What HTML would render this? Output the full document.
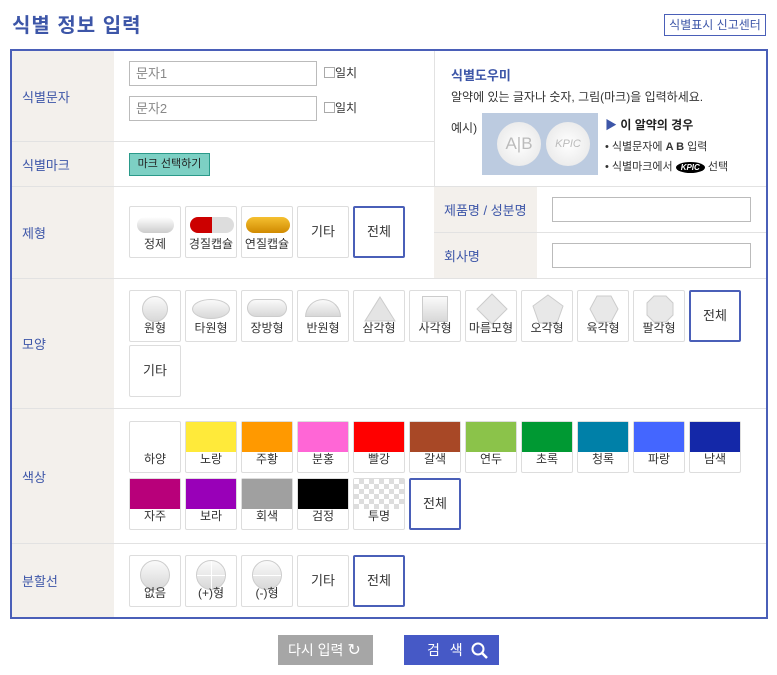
<!DOCTYPE html>
<html><head><meta charset="utf-8"><style>
*{box-sizing:border-box;margin:0;padding:0}
body{width:777px;height:675px;background:#fff;font-family:"Liberation Sans","Noto Sans CJK KR",sans-serif;font-size:13px;color:#333;position:relative;overflow:hidden}
.a{position:absolute}
h1{position:absolute;left:12px;top:9px;font-size:20px;color:#3d56a8;font-weight:bold;letter-spacing:1px}
.rep{left:664px;top:14px;width:102px;height:22px;border:1px solid #4a5fb8;font-size:12px;color:#3d56a8;text-align:center;line-height:20px}
.box{left:10px;top:49px;width:758px;height:570px;border:2px solid #4a5fb8}
.lab{background:#f3f0ec;color:#3d56a8;font-size:13px;display:flex;align-items:center;padding-left:10px}
.hl{height:1px;background:#e2e2e2}
.inp{border:1px solid #bbb;height:25px;font-size:13px;color:#888;padding-left:6px;line-height:23px}
.b{position:absolute;width:52px;height:52px;border:1px solid #ddd;border-radius:2px;background:#fff;font-size:12px;color:#333;text-align:center}
.b .t{position:absolute;bottom:5px;left:0;right:0}
.b.c{line-height:50px;font-size:13px}
.b.sel{border:2px solid #4a5fb8;line-height:48px}
.sw{position:absolute;left:0;top:0;right:0;height:30px}
.sh{position:absolute;left:50%;transform:translateX(-50%);background:linear-gradient(#fafafa,#d8d8d8);border:1px solid #ccc}
</style></head><body>
<h1>식별 정보 입력</h1>
<div class="a rep">식별표시 신고센터</div>
<div class="a box"></div>
<div class="a lab" style="left:12px;top:51px;width:102px;height:90px">식별문자</div>
<div class="a lab" style="left:12px;top:142px;width:102px;height:44px">식별마크</div>
<div class="a lab" style="left:12px;top:187px;width:102px;height:91px">제형</div>
<div class="a lab" style="left:12px;top:279px;width:102px;height:129px">모양</div>
<div class="a lab" style="left:12px;top:409px;width:102px;height:134px">색상</div>
<div class="a lab" style="left:12px;top:544px;width:102px;height:73px">분할선</div>
<div class="a lab" style="left:434px;top:187px;width:103px;height:45px">제품명 / 성분명</div>
<div class="a lab" style="left:434px;top:233px;width:103px;height:45px">회사명</div>
<div class="a hl" style="left:12px;top:141px;width:422px"></div>
<div class="a hl" style="left:12px;top:186px;width:754px"></div>
<div class="a hl" style="left:434px;top:232px;width:332px"></div>
<div class="a hl" style="left:12px;top:278px;width:754px"></div>
<div class="a hl" style="left:12px;top:408px;width:754px"></div>
<div class="a hl" style="left:12px;top:543px;width:754px"></div>
<div class="a" style="left:434px;top:51px;width:1px;height:135px;background:#e2e2e2"></div>
<div class="a inp" style="left:129px;top:61px;width:188px">문자1</div>
<div class="a inp" style="left:129px;top:96px;width:188px">문자2</div>
<div class="a" style="left:324px;top:64px;font-size:12px"><span style="display:inline-block;width:11px;height:11px;border:1px solid #aaa;vertical-align:-1px"></span>일치</div>
<div class="a" style="left:324px;top:99px;font-size:12px"><span style="display:inline-block;width:11px;height:11px;border:1px solid #aaa;vertical-align:-1px"></span>일치</div>
<div class="a" style="left:129px;top:153px;width:81px;height:23px;background:#7dd0c4;border:1px solid #2a9a8a;font-size:11px;color:#222;text-align:center;line-height:21px">마크 선택하기</div>
<div class="a" style="left:451px;top:65px;color:#3d56a8;font-size:13px;font-weight:bold">식별도우미</div>
<div class="a" style="left:451px;top:88px;font-size:12px">알약에 있는 글자나 숫자, 그림(마크)을 입력하세요.</div>
<div class="a" style="left:451px;top:119px;font-size:12px">예시)</div>
<div class="a" style="left:482px;top:113px;width:116px;height:62px;background:#bccbe0">
<div class="a" style="left:15px;top:9px;width:44px;height:44px;border-radius:50%;background:radial-gradient(#fff,#e4e4e4);color:#bbb;font-size:17px;text-align:center;line-height:44px">A|B</div>
<div class="a" style="left:64px;top:9px;width:44px;height:44px;border-radius:50%;background:radial-gradient(#fff,#e4e4e4);color:#bbb;font-size:11px;font-style:italic;text-align:center;line-height:44px">KPIC</div></div>
<div class="a" style="left:605px;top:116px;font-size:12px;font-weight:bold;color:#222"><span style="color:#3d56a8">▶</span> 이 알약의 경우</div>
<div class="a" style="left:605px;top:138px;font-size:11px">• 식별문자에 <b>A B</b> 입력</div>
<div class="a" style="left:605px;top:158px;font-size:11px">• 식별마크에서 <span style="display:inline-block;background:#000;color:#fff;border-radius:50%;font-size:8px;font-style:italic;padding:1px 5px;font-weight:bold">KPIC</span> 선택</div>
<div class="a inp" style="left:552px;top:197px;width:199px"></div>
<div class="a inp" style="left:552px;top:243px;width:199px"></div>
<div class="b" style="left:129px;top:206px"><div class="a" style="left:7px;top:10px;width:37px;height:16px;border-radius:8px;background:linear-gradient(#fff,#ccc)"></div><div class="t">정제</div></div>
<div class="b" style="left:185px;top:206px"><div class="a" style="left:4px;top:10px;width:44px;height:16px;border-radius:8px;background:linear-gradient(90deg,#c00 50%,#ddd 50%)"></div><div class="t">경질캡슐</div></div>
<div class="b" style="left:241px;top:206px"><div class="a" style="left:4px;top:10px;width:44px;height:16px;border-radius:8px;background:linear-gradient(#f5c030,#d08a00)"></div><div class="t">연질캡슐</div></div>
<div class="b c" style="left:297px;top:206px">기타</div>
<div class="b c sel" style="left:353px;top:206px">전체</div>
<div class="b" style="left:129px;top:290px"><div class="sh" style="top:5px;width:26px;height:26px;border-radius:50%"></div><div class="t">원형</div></div>
<div class="b" style="left:185px;top:290px"><div class="sh" style="top:8px;width:38px;height:20px;border-radius:50%"></div><div class="t">타원형</div></div>
<div class="b" style="left:241px;top:290px"><div class="sh" style="top:8px;width:40px;height:18px;border-radius:9px"></div><div class="t">장방형</div></div>
<div class="b" style="left:297px;top:290px"><div class="sh" style="top:8px;width:36px;height:18px;border-radius:18px 18px 0 0"></div><div class="t">반원형</div></div>
<div class="b" style="left:353px;top:290px"><svg class="a" style="left:10px;top:5px" width="32" height="26"><polygon points="16,1 31,25 1,25" fill="#e4e4e4" stroke="#ccc"/></svg><div class="t">삼각형</div></div>
<div class="b" style="left:409px;top:290px"><div class="sh" style="top:5px;width:26px;height:26px"></div><div class="t">사각형</div></div>
<div class="b" style="left:465px;top:290px"><svg class="a" style="left:10px;top:2px" width="32" height="32"><polygon points="16,1 31,16 16,31 1,16" fill="#e8e8e8" stroke="#ccc"/></svg><div class="t">마름모형</div></div>
<div class="b" style="left:521px;top:290px"><svg class="a" style="left:10px;top:3px" width="32" height="30"><polygon points="16,1 31,12 25,29 7,29 1,12" fill="#e8e8e8" stroke="#ccc"/></svg><div class="t">오각형</div></div>
<div class="b" style="left:577px;top:290px"><svg class="a" style="left:11px;top:4px" width="30" height="28"><polygon points="8,1 22,1 29,14 22,27 8,27 1,14" fill="#e8e8e8" stroke="#ccc"/></svg><div class="t">육각형</div></div>
<div class="b" style="left:633px;top:290px"><svg class="a" style="left:12px;top:4px" width="28" height="28"><polygon points="8,1 20,1 27,8 27,20 20,27 8,27 1,20 1,8" fill="#e8e8e8" stroke="#ccc"/></svg><div class="t">팔각형</div></div>
<div class="b c sel" style="left:689px;top:290px">전체</div>
<div class="b c" style="left:129px;top:345px">기타</div>
<div class="b" style="left:129px;top:421px"><div class="t">하양</div></div>
<div class="b" style="left:185px;top:421px"><div class="sw" style="background:#ffea3a"></div><div class="t">노랑</div></div>
<div class="b" style="left:241px;top:421px"><div class="sw" style="background:#ff9900"></div><div class="t">주황</div></div>
<div class="b" style="left:297px;top:421px"><div class="sw" style="background:#ff66d6"></div><div class="t">분홍</div></div>
<div class="b" style="left:353px;top:421px"><div class="sw" style="background:#ff0000"></div><div class="t">빨강</div></div>
<div class="b" style="left:409px;top:421px"><div class="sw" style="background:#a84826"></div><div class="t">갈색</div></div>
<div class="b" style="left:465px;top:421px"><div class="sw" style="background:#8bc34a"></div><div class="t">연두</div></div>
<div class="b" style="left:521px;top:421px"><div class="sw" style="background:#009933"></div><div class="t">초록</div></div>
<div class="b" style="left:577px;top:421px"><div class="sw" style="background:#0080a8"></div><div class="t">청록</div></div>
<div class="b" style="left:633px;top:421px"><div class="sw" style="background:#4466ff"></div><div class="t">파랑</div></div>
<div class="b" style="left:689px;top:421px"><div class="sw" style="background:#1428a8"></div><div class="t">남색</div></div>
<div class="b" style="left:129px;top:478px"><div class="sw" style="background:#b8007a"></div><div class="t">자주</div></div>
<div class="b" style="left:185px;top:478px"><div class="sw" style="background:#9900b8"></div><div class="t">보라</div></div>
<div class="b" style="left:241px;top:478px"><div class="sw" style="background:#a0a0a0"></div><div class="t">회색</div></div>
<div class="b" style="left:297px;top:478px"><div class="sw" style="background:#000"></div><div class="t">검정</div></div>
<div class="b" style="left:353px;top:478px"><div class="sw" style="background:repeating-conic-gradient(#ddd 0 25%,#fff 0 50%) 0 0/10px 10px"></div><div class="t">투명</div></div>
<div class="b c sel" style="left:409px;top:478px">전체</div>
<div class="b" style="left:129px;top:555px"><div class="sh" style="top:4px;width:30px;height:30px;border-radius:50%"></div><div class="t">없음</div></div>
<div class="b" style="left:185px;top:555px"><div class="sh" style="top:4px;width:30px;height:30px;border-radius:50%;background:linear-gradient(#fff,#fff) center/1px 100% no-repeat,linear-gradient(#fff,#fff) center/100% 1px no-repeat,linear-gradient(#fafafa,#d8d8d8)"></div><div class="t">(+)형</div></div>
<div class="b" style="left:241px;top:555px"><div class="sh" style="top:4px;width:30px;height:30px;border-radius:50%;background:linear-gradient(#fff,#fff) center/100% 1px no-repeat,linear-gradient(#fafafa,#d8d8d8)"></div><div class="t">(-)형</div></div>
<div class="b c" style="left:297px;top:555px">기타</div>
<div class="b c sel" style="left:353px;top:555px">전체</div>
<div class="a" style="left:278px;top:635px;width:95px;height:30px;background:#a6a6a6;color:#fff;font-size:14px;line-height:30px;padding-left:10px">다시 입력 <span style="font-size:16px">↻</span></div>
<div class="a" style="left:404px;top:635px;width:95px;height:30px;background:#4659c6;color:#fff;font-size:14px;line-height:30px;padding-left:23px;letter-spacing:3px">검 색
<svg class="a" style="left:66px;top:6px" width="20" height="20"><circle cx="8" cy="8" r="5.5" fill="none" stroke="#fff" stroke-width="2"/><line x1="12" y1="12" x2="17" y2="17" stroke="#fff" stroke-width="2.5"/></svg></div>
</body></html>
